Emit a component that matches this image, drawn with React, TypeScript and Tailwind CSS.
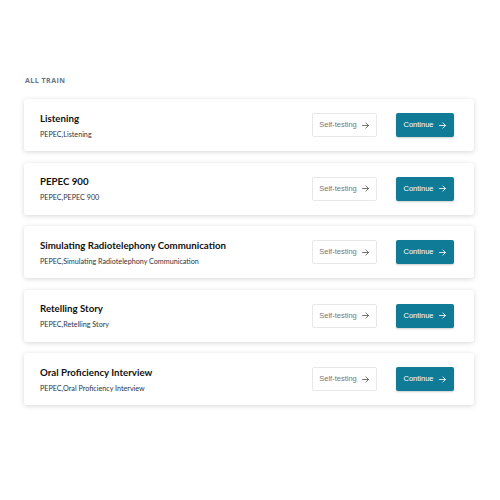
import React from 'react';

interface TrainItem {
  title: string;
  desc: string;
}

const items: TrainItem[] = [
  { title: 'Listening', desc: 'PEPEC,Listening' },
  { title: 'PEPEC 900', desc: 'PEPEC,PEPEC 900' },
  { title: 'Simulating Radiotelephony Communication', desc: 'PEPEC,Simulating Radiotelephony Communication' },
  { title: 'Retelling Story', desc: 'PEPEC,Retelling Story' },
  { title: 'Oral Proficiency Interview', desc: 'PEPEC,Oral Proficiency Interview' },
];

function Arrow({ className }: { className?: string }) {
  return (
    <svg viewBox="0 0 12 12" className={className} fill="none" stroke="currentColor" strokeWidth="1.1" strokeLinecap="round" strokeLinejoin="round">
      <path d="M2 6h8M6.5 2.5L10 6l-3.5 3.5" />
    </svg>
  );
}

function TrainCard({ item }: { item: TrainItem }) {
  return (
    <div className="flex items-center justify-between h-[52px] pl-4 pr-5 bg-white rounded-[3px] shadow-[0_1px_5px_rgba(0,0,0,0.16)]">
      <div className="flex flex-col">
        <div className="text-[9.7px] leading-[14px] font-bold text-[#111]">{item.title}</div>
        <div className="mt-[5px] text-[7.2px] leading-[10px] text-[#2f3340]">{item.desc}</div>
      </div>
      <div className="flex items-center gap-[19px]">
        <button className="flex items-center justify-center gap-[4px] w-[65px] h-6 border border-[#e8e8e8] rounded-[2px] bg-white text-[7.5px] text-[#777] font-['Liberation_Sans',sans-serif]">
          Self-testing
          <Arrow className="w-[9px] h-[9px] text-[#555]" />
        </button>
        <button className="flex items-center justify-center gap-[4px] w-[58px] h-6 rounded-[2px] bg-[#0f7b97] text-[7.5px] text-white shadow-[0_1px_2px_rgba(0,0,0,0.2)] font-['Liberation_Sans',sans-serif]">
          Continue
          <Arrow className="w-[9px] h-[9px]" />
        </button>
      </div>
    </div>
  );
}

export default function App() {
  return (
    <div className="w-[500px] h-[500px] bg-white pt-[76px] px-6 font-['Lato',sans-serif]">
      <div className="pl-px text-[7px] leading-[10px] font-bold tracking-[0.07em] text-[#64748b] mb-[13px] font-['Open_Sans',sans-serif]">ALL TRAIN</div>
      <div className="flex flex-col gap-[11.5px] w-[450px]">
        {items.map((item) => (
          <TrainCard key={item.title} item={item} />
        ))}
      </div>
    </div>
  );
}
